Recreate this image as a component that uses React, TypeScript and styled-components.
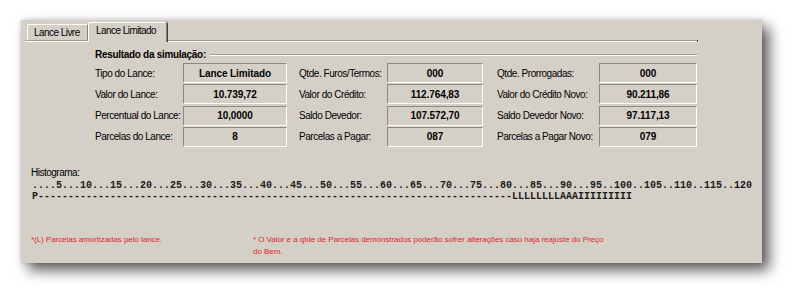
import React from 'react';
import styled, { createGlobalStyle } from 'styled-components';

const GlobalStyle = createGlobalStyle`
  html, body {
    margin: 0;
    padding: 0;
    background: #ffffff;
  }
  body {
    font-family: "Liberation Sans", Arial, sans-serif;
    color: #000;
  }
`;

const Stage = styled.div`
  width: 803px;
  height: 306px;
  padding: 20px 0 0 21px;
  box-sizing: border-box;
`;

const Window = styled.div`
  width: 741px;
  height: 243px;
  box-sizing: border-box;
  padding: 2px 0 0 4px;
  background: #d4d0c8;
  box-shadow: 0 0 4px rgba(0, 0, 0, 0.15), 7px 7px 13px rgba(0, 0, 0, 0.65);
  display: flex;
  flex-direction: column;
`;

const TabStrip = styled.div`
  display: flex;
  align-items: flex-end;
  height: 18px;
  padding-left: 2px;
  position: relative;
  z-index: 1;
`;

const Tab = styled.div<{ $active?: boolean }>`
  box-sizing: border-box;
  height: ${p => (p.$active ? '20px' : '16px')};
  margin-bottom: ${p => (p.$active ? '-2px' : '0')};
  width: ${p => (p.$active ? '79px' : '61px')};
  padding: ${p => (p.$active ? '2px 0 0 7px' : '2px 0 0 6px')};
  background: #d4d0c8;
  border-top: 1px solid #ffffff;
  border-left: 1px solid #ffffff;
  border-right: 1px solid #808080;
  box-shadow: ${p => (p.$active ? '1px 0 0 #404040' : 'none')};
  border-radius: 2px 2px 0 0;
  font-size: 10px;
  letter-spacing: -0.55px;
  line-height: 12px;
  white-space: nowrap;
`;

const Pane = styled.div`
  width: 672px;
  flex: 1;
  border-top: 1px solid #a09d96;
  box-shadow: inset 0 1px 0 #ffffff;
  display: flex;
  flex-direction: column;
  position: relative;
`;

const PaneEnd = styled.span`
  position: absolute;
  right: -1px;
  top: -1px;
  width: 1px;
  height: 2px;
  background: #404040;
`;

const GroupHeader = styled.div`
  display: flex;
  align-items: center;
  margin: 7px 0 0 70px;
  height: 12px;
`;

const GroupTitle = styled.span`
  font-size: 10px;
  font-weight: bold;
  letter-spacing: -0.3px;
  white-space: nowrap;
  margin-right: 4px;
`;

const EtchedLine = styled.div`
  flex: 1;
  height: 1px;
  background: #a09d96;
  box-shadow: 0 1px 0 #ffffff;
`;

const FieldGrid = styled.div`
  display: grid;
  grid-template-columns: 88px 104px 100px 96px 116px 98px;
  grid-auto-rows: 20px;
  row-gap: 1.33px;
  margin: 3px 0 0 70px;
`;

const Label = styled.div<{ $indent?: number }>`
  display: flex;
  align-items: center;
  padding-left: ${p => p.$indent ?? 0}px;
  font-size: 10px;
  letter-spacing: -0.45px;
  white-space: nowrap;
`;

const ValueBox = styled.div`
  box-sizing: border-box;
  border: 1px solid;
  border-color: #8c8984 #ffffff #ffffff #8c8984;
  display: flex;
  align-items: center;
  justify-content: center;
  font-size: 10px;
  font-weight: bold;
  letter-spacing: -0.1px;
`;

const HistTitle = styled.div`
  margin: 20px 0 0 6px;
  font-size: 10px;
  letter-spacing: -0.5px;
  line-height: 12px;
`;

const HistLines = styled.pre`
  margin: 1px 0 0 7px;
  font-family: "Liberation Mono", "Courier New", monospace;
  font-weight: bold;
  font-size: 10px;
  line-height: 11px;
  color: #1a1a1a;
`;

const Notes = styled.div`
  display: grid;
  grid-template-columns: 222px 352px;
  margin: 32px 0 0 6px;
`;

const Note = styled.div`
  color: #e2242c;
  font-size: 8px;
  letter-spacing: -0.05px;
  line-height: 12px;
`;

const rows = [
  ['Tipo do Lance:', 'Lance Limitado', 'Qtde. Furos/Termos:', '000', 'Qtde. Prorrogadas:', '000'],
  ['Valor do Lance:', '10.739,72', 'Valor do Crédito:', '112.764,83', 'Valor do Crédito Novo:', '90.211,86'],
  ['Percentual do Lance:', '10,0000', 'Saldo Devedor:', '107.572,70', 'Saldo Devedor Novo:', '97.117,13'],
  ['Parcelas do Lance:', '8', 'Parcelas a Pagar:', '087', 'Parcelas a Pagar Novo:', '079'],
];

const indents = [0, 12, 14];

const scale =
  '....5...10...15...20...25...30...35...40...45...50...55...60...65...70...75...80...85...90...95..100..105..110..115..120';
const bars = 'P' + '-'.repeat(79) + 'L'.repeat(8) + 'AAA' + 'I'.repeat(9);

const App: React.FC = () => {
  return (
    <>
      <GlobalStyle />
      <Stage>
        <Window>
          <TabStrip>
            <Tab>Lance Livre</Tab>
            <Tab $active>Lance Limitado</Tab>
          </TabStrip>
          <Pane>
            <PaneEnd />
            <GroupHeader>
              <GroupTitle>Resultado da simulação:</GroupTitle>
              <EtchedLine />
            </GroupHeader>
            <FieldGrid>
              {rows.map((row, r) =>
                [0, 1, 2].map(c => (
                  <React.Fragment key={`${r}-${c}`}>
                    <Label $indent={indents[c]}>{row[c * 2]}</Label>
                    <ValueBox>{row[c * 2 + 1]}</ValueBox>
                  </React.Fragment>
                ))
              )}
            </FieldGrid>
            <HistTitle>Histograma:</HistTitle>
            <HistLines>
              {scale}
              {'\n'}
              {bars}
            </HistLines>
            <Notes>
              <Note>*(L) Parcelas amortizadas pelo lance.</Note>
              <Note>
                * O Valor e a qtde de Parcelas demonstrados poderão sofrer alterações caso haja reajuste do Preço
                do Bem.
              </Note>
            </Notes>
          </Pane>
        </Window>
      </Stage>
    </>
  );
};

export default App;
